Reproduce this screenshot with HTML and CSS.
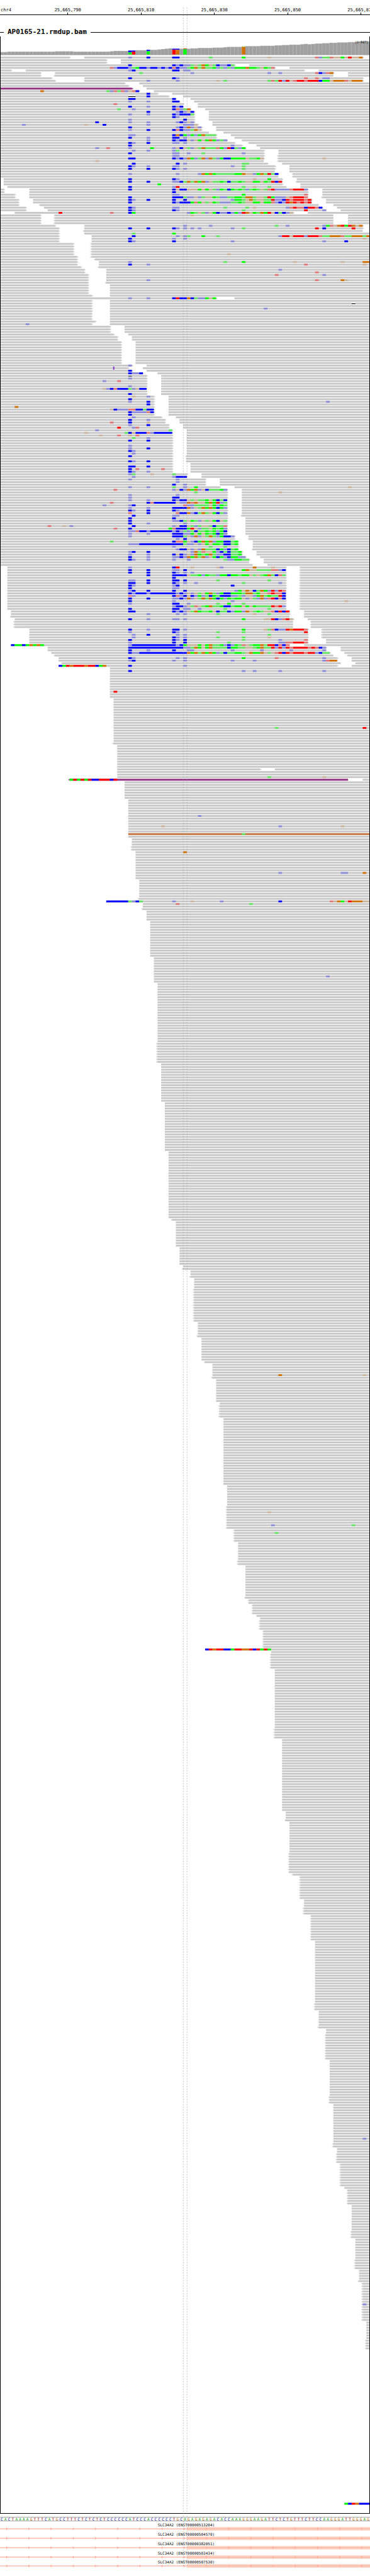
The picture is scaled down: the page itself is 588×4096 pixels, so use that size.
FILE: index.html
```html
<!DOCTYPE html>
<html lang="en">
<head>
<meta charset="utf-8">
<title>AP0165-21.rmdup.bam</title>
<link rel="stylesheet" href="styles.css">
</head>
<body>
<main class="browser">
  <header class="ruler">
    <span class="chrom">chr4</span>
    <span class="mark mark-a">25,665,790</span>
    <span class="mark mark-b">25,665,810</span>
    <span class="mark mark-c">25,665,830</span>
    <span class="mark mark-d">25,665,850</span>
    <span class="mark mark-e">25,665,870</span>
  </header>

  <fieldset class="track">
    <legend class="track-name">AP0165-21.rmdup.bam</legend>
    <div class="coverage">
      <svg id="coverage" class="plot" viewBox="0 0 1000 55" aria-label="Coverage"></svg>
      <span class="range">[0-947]</span>
    </div>
    <svg id="reads" class="plot" viewBox="0 0 1000 6643" aria-label="Aligned reads"></svg>
  </fieldset>

  <div id="sequence" class="sequence"></div>

  <section id="genes" class="genes"></section>

  <svg class="center-lines" viewBox="0 0 1000 6964" aria-hidden="true">
    <path d="M495.5 20V6944M505.5 20V6944"/>
  </svg>
</main>
<script src="script.js"></script>
</body>
</html>
```
FILE: styles.css
```css
* { box-sizing: border-box; }

body {
  margin: 0;
  background: #fff;
  color: #000;
  font-family: "DejaVu Sans Mono", "Liberation Mono", monospace;
}

.browser {
  position: relative;
  overflow: hidden;
  padding-bottom: 12px;
}

.ruler {
  display: grid;
  grid-template-columns: repeat(101, minmax(0, 1fr));
  padding-top: 13px;
  border-bottom: 1px solid #000;
  margin-bottom: 20px;
  font-size: 7px;
  line-height: 7px;
  white-space: nowrap;
}

.chrom { grid-column: 1; padding-left: 1px; }

.mark {
  grid-row: 1;
  display: flex;
  flex-direction: column;
  align-items: center;
}

.mark::after {
  content: "";
  width: 1px;
  height: 3px;
  background: #000;
}

.mark-a { grid-column: 19; }
.mark-b { grid-column: 39; }
.mark-c { grid-column: 59; }
.mark-d { grid-column: 79; }
.mark-e { grid-column: 99; }

.track {
  position: relative;
  min-width: 0;
  margin: 0;
  padding: 0;
  border: 0 solid #000;
  border-width: 1px 0;
}

.track::after {
  content: "";
  position: absolute;
  inset: 0;
  border: 0 solid #000;
  border-width: 0 1px;
}

.track-name {
  margin-left: 6px;
  padding: 0 6px;
  font-size: 11px;
  font-weight: bold;
  line-height: 14px;
}

.plot { display: block; width: 100%; height: auto; }

.coverage { position: relative; }

.range {
  position: absolute;
  top: 7px;
  right: 3px;
  font-size: 5px;
  line-height: 5px;
}

.bar { fill: #a0a0a0; }
.bar-top { fill: #b4b4b4; }
.baseline { fill: #777; }

.read { fill: #c8c8c8; }
.read-purple { fill: #902f80; }
.read-orange { fill: #c5743d; }
.gap { fill: #fff; }
.deletion { fill: #000; }
.insertion { fill: #7719d6; }

.base-A { fill: #00ff00; }
.base-C { fill: #0000ff; }
.base-G { fill: #d17105; }
.base-T { fill: #ff0000; }
.base-a { fill: #64e664; }
.base-c { fill: #8c8cd9; }
.base-g { fill: #cbb59e; }
.base-t { fill: #e07878; }

.sequence {
  display: grid;
  grid-template-columns: repeat(101, minmax(0, 1fr));
  margin-top: 5px;
  border: 0 solid #aaa;
  border-width: 1px 0;
  font-size: 6px;
  line-height: 5px;
  text-align: center;
}

.nt-A { color: #009600; }
.nt-C { color: #00009b; }
.nt-G { color: #a86400; }
.nt-T { color: #a00000; }

.genes {
  display: flex;
  flex-direction: column;
  justify-content: space-between;
  height: 71px;
  margin-top: 3px;
}

.gene-name {
  font-size: 6px;
  line-height: 6px;
  padding-left: 4px;
  text-align: center;
}

.gene-model { display: block; width: 100%; height: 6px; }
.exon { fill: #ffdaca; }
.intron, .strand { fill: #ffa998; }

.center-lines {
  position: absolute;
  top: 0;
  left: 0;
  width: 100%;
  height: auto;
  pointer-events: none;
}

.center-lines path {
  fill: none;
  stroke: #999;
  stroke-width: 1;
  stroke-dasharray: 3 4;
}
```
FILE: script.js
```js
const COLS = 101;
const CELL = 1000 / COLS;
const PITCH = 7;

const rect = (cls, x, y, w, h) =>
  `<rect class="${cls}" x="${x.toFixed(2)}" y="${y}" width="${w.toFixed(2)}" height="${h}"/>`;

/* Coverage: [last column, bar height]; coloured stacks are listed from the top. */
const COVERAGE = [
  [1, 7], [14, 8], [19, 9], [29, 8], [30, 9], [34, 10], [36, 11], [39, 12], [42, 13],
  [43, 14], [44, 15], [45, 16], [46, 17], [49, 16], [50, 17], [51, 16], [53, 17],
  [57, 18], [60, 19], [61, 20], [65, 21], [66, 22], [70, 23], [74, 24], [76, 25],
  [78, 26], [81, 27], [82, 28], [83, 29], [84, 28], [85, 29], [87, 30], [89, 31],
  [91, 32], [94, 33], [97, 34], [100, 36]
];
const STACKS = {
  35: "C5A6", 36: "C3T8", 40: "C4A9", 47: "C3T13", 48: "C3G13", 50: "G2C1A14", 66: "A1G21"
};

function drawCoverage() {
  let out = "";
  let col = 0;
  for (const [last, height] of COVERAGE) {
    for (; col <= last; col++) {
      const x = col * CELL;
      let y = 49 - height;
      if (STACKS[col]) {
        for (const [, base, h] of STACKS[col].matchAll(/([ACGT])(\d+)/g)) {
          out += rect("base-" + base, x, y, CELL, +h);
          y += +h;
        }
      } else {
        out += rect("bar-top", x, y, CELL, height);
        out += rect("bar", x, y + 1, CELL - 1, height - 1);
      }
    }
  }
  document.getElementById("coverage").innerHTML = out + rect("baseline", 0, 49, 1000, 1);
}

/*
 * One line per read row, "xN" repeats it.
 *   @n[<]     first covered column, with a left arrow
 *   a[>]_b[<] gap between two reads, with their arrows
 *   Pa_b Oa_b span in another colour
 *   nACGT     mismatches from column n, lower case for low quality, - for a deletion
 *   In        insertion before column n
 */
const ROWS = `
19>_23 99>_101 35c 40C 47CC 57a 66A 73g 86tcaatggAgTggG
29>_33 x2
64>_68 35C 47CcCccagaGAgaCccCa
75>_79 30tcCCCcaACCcCCcCcCtCccaAGaGaaAcacacAAAGAAagAat
3>_7 83>_87 35cC 47CC 50cc
11>_15 91>_95 38a 52c 73c 76c 86tCctG
11>_15< 91_95
14>_23 99>_101 35C 47Cc 83t 86t 88cc
15>_23 99>_101 40c 48c 59g 61a 73ataTcTgtTTtTTTCAAgGGGtgGGG
34>_38
35>_39
P0_36 36>_40
38>_42 11G 29actatcgtC
43>_47 40C
46>_50 35-- 40C
48>_52 35CC 47C
49>_53 35c 40c 47CC
50>_54 31t
50>_54 35C 40c 47CcC
52>_56 32a 36c 47CtcaG
53>_57 40C 48cCcgC
53>_57 35c 40c 47CcCCCa
53>_57 47Cc
53>_57 35c 50C
53>_58 26C 35c 40c 48cCcgc
54>_58 6c 23g 28C 40c 50cccg
55>_59 35C 48cCcGcgc
55>_59 35c 40C 47CtCccaGg
57_61
59>_63 35cc 47CGCAcAcAGaaa
59>_64 35C 40c 47CC 50c
62>_66 40c 47CcCCgcgAgAGAcac
64>_68< 35Cc 40C 47cc 50c
66>_70 35C 63c
67>_71 26c 29t 35c 41A 47cgCgacgaGaaatAcTCacA
72>_76 36c 40c 47ca
72>_76 35C 47cc 51c 55a 66c
72>_76< 47cc
72>_76< 35CC 47CcCcGAcaGcGacACCAAAAgaaAg 88g
72_76< 26g
73>_77 36C 48C 50c 66aa
75>_79 35Cc 40c 47cc 63c 66a
75>_79 35C 40C 47Cc 50c 66a
75_79
76>_80< 35c 48c 54cGAGAaaaaaAAGggcAGaTaC
76_80<
@1 77>_81 35C 47Cc 69g 73A
@1 77>_81< 35C 40C 47ccCaGaGAGcgaaAaCaaAaggAAgAaTCT
@1 77>_82 43A
@2 78>_82 35C 47cT 66a 69g 73a
1>_8 84>_88 35C 47CgCCgggAgAgacAaCAaAacaAagatTcccctTTTc
1>_8 84>_88 47C
4>_8 84>_88 47cc 66A 83t
4>_8 84>_88< 35C 47CCCaccgcaggAaccaaAAaGGaggaTAcccgtTTTt
5>_9 85>_89 35Cc 40C 47C 50C 63cAAagGaggaaTccCTtTTTtT
5>_9 85>_89 35C 47CcCCCAtAgagAacccaaAaggAAgAAtcCcTGTtTtT
5>_11< 87_91
7>_12 88>_92 35Cc 47cc 61a 67a 69g 78ctTttCTTtC
7>_13 89>_93 35Cc 47Cc 66a 83T 88c
0>_4 80>_84 16T 30t 35CA 51cAagacgACccCcAcTGgAaGATgCaCcg
11>_15< 91_95 52g
11>_15< 91_95 x3
15>_23 99>_101 50c 57c 75a 78c 88cAtgGTATGgG
16>_23 99>_101 35C 40C 47Cc 50c 52c 54c 63c 66a 86T 88C 96T
16>_23< 99_101
16>_23 36a 47A
16>_25 36C 48c 50ca 55A 59a 76cTTgTTTcTTTtaaGGGtaaGGGaG
16>_25 35C 47c 50c 99g
16>_25 35Cc 47C 63c 88c 94C
20>_25< x4
20>_25< 62g
21>_25<
21>_26<
21>_27 35c 61a 66A 80g 93g 99GG
21>_27 35C 40c 83t 99g
22>_27<
23>_29 76c
23>_29 86t
24>_29 75t 88c
24>_29
24>_29 40c 86t 93Gg
24>_29<
24>_30 x4
25>_30
59>_64 35c 40c 47CTCCGCaccAgA
25>_30
25>_30 96-
25>_30
25>_30 72c
25>_30 x4
26>_30
25>_30 7c
30>_34 x3
31>_35
32>_36 x2
33>_37 x9
36>_40 35c
35>_39 I31
36>_40 35C
39>_43 35CccC
40>_44 35-
40>_44 35c
40>_44 28c 32t
40>_44
40>_44 35c
40>_44 28gcCtCCCacgCC
40>_44
40>_44 35C
42>_46 36g 40c
42>_46 35C
42>_46 35c 40C 89c
42>_46 40C
42>_46 4G
42>_46 30gCcccttCCaCC
42>_46 35CcccctC
42>_46 35C
44>_48 36c
45>_49 35C 40c
45>_49 30t 35C 40g
46>_50 35c 40C
46>_50 32T 36ct
47>_51 26c 46a
47>_51 23g 34aCgCCCtcCCCCC
47>_51 27g 32t 35g 37t
47>_51 36a 40c
47>_51 35C 40C
47>_51
47>_51 35c
47>_51 35c 40C
47>_51 35Cc
47>_51 36c
47>_51< 35C
47>_51<
47>_51< 35Cc 40C
47>_52
47>_52 35CC 40C
47>_52 35C 37t 44t
47>_52 35Cc 40c
51>_55 35ca 41g 47a
51>_55 36c 47cCCC
56>_60 35c 48c
56>_60 48c
56>_60 47C 50c
60>_64 35c 40c 47a 50c 53A 95g
62>_66 31t 47cgCcGAGcgCaaaAc
62>_66 53a 76g
62>_66 35c 48c
62>_66 35c 47CC
62>_66 35c 40c 47CcCCgagaaAgACaC
62>_66 30t 40CtCCCCCCgccGtGggAGATca
62>_66 28c 35cC 50tccaaaagAcAa
62>_66 35c 40c 47CCCCGcgaGAGACAc
62>_66 35Cc 40C 47Cc
62>_66 35t 40C 48tCCGcCaGagACac
62>_66< 36C 47cc
62>_67 35C 47C
62>_67 35C 47ccCagAacgagACga
62>_67 35C 40c 50c
62>_67 13t 17g 19c 36C 47cgCCgacaggaCaat
62>_67 31t 35C 46AtCCCATgcaagAaAc
62>_67 35cctCCcCCCCCCcCcacaCaaAaAcAC
62>_67 35c 40c 47CCCccAgAgAaACAc
64>_68< 35c 47CCCagcGcgaGacACCc
64>_68< 48c 50C
65>_69 30a 47CttAgcCAGAGcAACCaA
65>_69 35cccCCCCCCCCCCCCaccgcgAgAAaCCaA
65>_69 47c 57a 61a
65>_69< 48cCCgcgcGaaaCAcCaA
66>_70 35cC 40C 52cGatggAcCaCaaA
66>_70 35c 40c 47CgCcgcGAaAGaccCCaaA
67>_71 35C 40c 47ccCcGAGaGcgACAcCAAcc
68>_72 35Cc 40c 47c 51c 61accAAaa
68_72
69_73
@2 78>_82< 35c 47CT 52g 59gc 69G 74g
@2 78>_82< 35C 40C 47cc 50C 66AGggaaaattcC
@2 78>_82< 35C 40C 47Cc 50c 52c
@2 78>_82< 40C 47CCCCgaaAcAaacAACAAaAAgagaAGaCta
@2 78>_82< 47C
@2 78>_82< 35cc 40C 47CC 50C 59a 73a
@2 78>_82< 35CC 40C 47Cc 50c 53c 66a 76c
@2 78>_82< 35Cc 47cC 63C
@2 78>_82< 35C 47cc
@2 78>_82< 35cC 40C 47C 50C 64cAgGgCaGAcTcTt
@2 78>_82< 35CcCCCcCCCCCCCcCcgcgagAGacACCAAAaGGaAggtTttC
@2 78>_82< 35tc 47CtcCgCcAcaCAaCCCccacggcAGaAaaTC
@2 78>_82< 35C 40C 47ccCcGcgaGaGACAcAaAAgcgacGctTCtC
@2 78>_82< 35C 47c 63c 94g
@2 78>_82< 35c 47CC 51c 59a 62A 66a
@2 78>_82< 47cCCcgatgaAGaaACCaAAgAgAaaaaTtTc
@2 78>_82< 35C 47CC 50cc 54c 61a 73a
@3 79>_83 35CC 47CcCcgaGAaaAgCaaCcAAcGgaAaggtCTCT
@3 79>_83 40c 48c 50c 59a 69g 73a
@3< 79_83
@4 80>_84 35C 40c 47cc 50c 66A 72ggTCctTg
@4< 80_85< x3
@8 84>_88< 35C 40c 47CC 50c 66A 72gatCccTGTTTt
@8 84>_88< 35c 47Cc 59a 66a 83T
@8 84>_88< 36c 40C 48c 50c 73a
@8 84>_88< 36c 47Cc 50c 59a 66a 73g
@8 84>_89 35C 47Cc 50C 66a 76c 83t
@8 84>_89 35c 47C 50C 62a 76ccttTTTt
@3 79>_83 3CAACAGAGA 35cCCCCCCCCCCCCcCAgggAgAGaaAcCcAatgaAAGaTTCtCt
@13 89>_93 35CCCCCCCCCCCCCCCccaGAgAGaaaaCAAaaggaAGaaTcTcTtTTTTtTtCc
@13 89>_93 35C 40c 47C 51cc 63c 71c 79c 88c
@14 90>_94 35CccCCCCCCCCCCCCCGAGaGAGAcaCaaAAagGAAGgagtTCTtTTTtTTcCaa
@15< 91_95<
@16 92>_96 35Cc 48c 50c 66A 75t 88c
@16 92>_96 35cC 47c 50c 63c 69c 88ctGG
@17< 93_97
@16 92>_96 16CATGTTTGTTCAG 35C 50c
@30
@30 35C 66c 69c 76c 88c
@30 x7
@30 31T
@30 x2
@31 x11
@31 75a 99T
@31 x5
@31<
@32 x9
@32 71>_75
@32 x2
@32 73a 88g
@19< P19_95 95_99 19ATATATCCTTTCT
@34 x7
@35 x6
@35 54c
@35 x3
@35 44g 76c 93g
@35 x2
@35 O35_101 66a
@35
@36 x3
@36< x2
@37 50G
@37 x7
@37 76c 93cc 99G
@37 x2
@38 x7
@38<
@29 29CCCCCCacCa 47c 52g 60c 76C 90tgGAgTGGGgg
@39 48t 68a
@39
@39<
@40 x4
@41 x14
@42 x7
@42 89c
@42 x2
@43 x23
@43< x8
@44 x15
@45 x19
@46 x26
@47<
@48 x10
@49 x7
@50
@50<
@52 x2
@52<
@53 x4
@53< x13
@54 x5
@54<
@55 x9
@56<
@58 x4
@58 76G 99g
@58<
@59 x9
@60
@60< x5
@61 x26
@62 x8
@62< x2
@62< 73g
@62< x4
@62< 74c 96a
@62<
@64<
@64< 75a
@64< x3
@65 x7
@65< x2
@67 x12
@67<
@68< x2
@69< x4
@70
@71
@71< x4
@72< x7
@56 56CTGTTCCATTGGTCTATA
@74
@74< x6
@75 x23
@75< x4
@77 x28
@78 x3
@78<
@79 x12
@79< x8
@80<
@82< x9
@83 x3
@83< x3
@85< x10
@86 x24
@86< x3
@87 x6
@87<
@89 x2
@89< x10
@90 x14
@90< x3
@91 x13
@91 99c
@91
@91< x2
@92 x2
@92< x4
@93< x9
@94
@95< x6
@96 x10
@96< x3
@97 x8
@97< x4
@98 x4
@98<
@99< x8
@99< 99c
@99< x6
@100 x7
@100< x4
@101 x59
@94 94ACTGCCC
`;

const TINTS = { P: "read-purple", O: "read-orange" };

function arrow(cls, x, y, dir) {
  const p = n => (x + dir * n).toFixed(1);
  return `<path class="${cls}" d="M${p(0)} ${y}L${p(2)} ${y + 1}V${y + 2}H${p(4)}V${y + 3}H${p(2)}V${y + 4}L${p(0)} ${y + 5}z"/>`;
}

function drawRow(tokens, y) {
  const gaps = [];
  const tints = [];
  let start = { col: 0, arrow: false };
  let marks = "";
  for (const t of tokens) {
    let m;
    if ((m = t.match(/^@(\d+)(<?)$/))) {
      start = { col: +m[1], arrow: !!m[2] };
    } else if ((m = t.match(/^(\d+)(>?)_(\d+)(<?)$/))) {
      gaps.push({ from: +m[1], right: !!m[2], to: +m[3], left: !!m[4] });
    } else if ((m = t.match(/^([PO])(\d+)_(\d+)$/))) {
      tints.push({ cls: TINTS[m[1]], from: +m[2], to: +m[3] });
    } else if ((m = t.match(/^I(\d+)$/))) {
      const x = m[1] * CELL;
      marks += rect("insertion", x - 0.5, y - 1, 2, 7) +
        rect("insertion", x - 1.5, y - 1, 4, 2) + rect("insertion", x - 1.5, y + 4, 4, 2);
    } else if ((m = t.match(/^(\d+)([ACGTacgt-]+)$/))) {
      const run = /(.)\1*/g;
      for (const r of m[2].matchAll(run)) {
        const x = (+m[1] + r.index) * CELL;
        const w = r[0].length * CELL;
        marks += r[1] === "-"
          ? rect("gap", x, y, w, 5) + rect("deletion", x, y + 2, w, 2)
          : rect("base-" + r[1], x, y, w, 5);
      }
    }
  }
  const tintAt = (from, to) => tints.find(t => t.from === from || t.to === to);
  let out = "";
  let left = start;
  for (const g of [...gaps, { from: COLS, to: COLS }]) {
    const tint = tintAt(left.col, g.from);
    const cls = tint ? tint.cls : "read";
    out += rect(cls, left.col * CELL, y, (g.from - left.col) * CELL, 5);
    if (left.arrow) out += arrow(cls, left.col * CELL, y, -1);
    if (g.right) out += arrow(cls, g.from * CELL, y, 1);
    left = { col: g.to, arrow: g.left };
  }
  return out + marks;
}

function drawReads() {
  let out = "";
  let row = 0;
  for (const line of ROWS.trim().split("\n")) {
    const tokens = line.split(" ");
    const last = tokens[tokens.length - 1];
    const count = last[0] === "x" ? +tokens.pop().slice(1) : 1;
    for (let i = 0; i < count; i++) out += drawRow(tokens, PITCH * row++);
  }
  document.getElementById("reads").innerHTML = out;
}

const SEQUENCE =
  "CACTAAAAGTTTCATGCCTTTCTCTCTCTC" + "CCCCCATCCCACCCCCCTGC" +
  "AGAGAGAGACACCAAAGGGAAGATTCTCTGTTTCTTCCAAGGGATTGGGAG";

function drawSequence() {
  document.getElementById("sequence").innerHTML =
    [...SEQUENCE].map(b => `<span class="nt-${b}">${b}</span>`).join("");
}

const TRANSCRIPTS = [
  "ENST00000513204", "ENST00000504570", "ENST00000382051", "ENST00000503434", "ENST00000507530"
];

function drawGenes() {
  let strand = "";
  for (let x = 17; x < 1000; x += 60) strand += `M${x} 1L${x + 3} 4V6L${x} 9z`;
  document.getElementById("genes").innerHTML = TRANSCRIPTS.map(id => `
    <div class="gene">
      <div class="gene-name">SLC34A2 (${id})</div>
      <svg class="gene-model" viewBox="0 0 1000 10" preserveAspectRatio="none">
        <rect class="exon" x="505" y="0" width="495" height="10"/>
        <rect class="intron" x="0" y="4" width="1000" height="2"/>
        <path class="strand" d="${strand}"/>
      </svg>
    </div>`).join("");
}

drawCoverage();
drawReads();
drawSequence();
drawGenes();
```
